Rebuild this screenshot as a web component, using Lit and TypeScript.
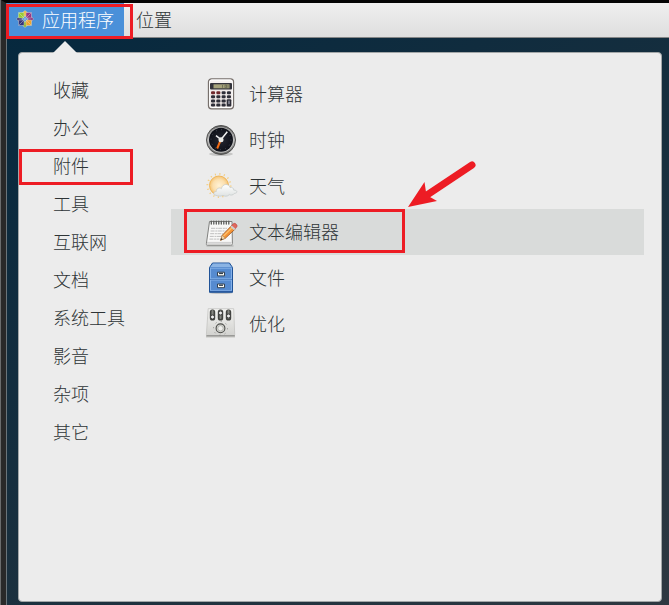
import { LitElement, html, css, svg } from "lit";
import { customElement, state } from "lit/decorators.js";
import { classMap } from "lit/directives/class-map.js";

const calculator = html`<svg class="icon" viewBox="0 0 32 32" aria-hidden="true">
  <defs><linearGradient id="c" x1="0" y1="0" x2="0" y2="1"><stop stop-color="#f8f4f3" /><stop offset="1" stop-color="#e4dddb" /></linearGradient></defs>
  <rect x="3.5" y=".8" width="25" height="30" rx="3" fill="url(#c)" stroke="#77706c" stroke-width="1.3" />
  <rect x="4.7" y="2" width="22.6" height="27.5" rx="2" fill="none" stroke="#fff" />
  <rect x="5" y="5" width="22" height="6.6" rx="1" fill="#34343c" />
  <rect x="8.5" y="6.3" width="16" height="4" fill="#a5a27b" />
  <path d="M17.5 7v2.8M20 7v2.8h1.5V7zM23 7v2.8" fill="none" stroke="#66664f" stroke-width=".8" />
  ${[0, 1, 2, 3].map((r) => [0, 1, 2, 3].map((c) => c === 3 && r > 1 ? null :
    svg`<rect x=${6 + c * 5.3} y=${13.2 + r * 4.1} width="4.1" height="3" rx="1.2" fill=${r === 0 && c < 2 ? "#70282c" : "#2e2e38"} />`))}
  <rect x="21.7" y="21.2" width="4.6" height="7.2" rx="1" fill="#2e2e38" />
  <rect x="23" y="22.6" width="2" height="3.5" fill="#777783" />
</svg>`;

const clock = html`<svg class="icon" viewBox="0 0 32 32" aria-hidden="true">
  <defs><linearGradient id="k" x1="0" y1="0" x2="0" y2="1"><stop stop-color="#666" /><stop offset=".5" stop-color="#b8b8b8" /><stop offset="1" stop-color="#626260" /></linearGradient>
  <radialGradient id="f"><stop stop-color="#252731" /><stop offset="1" stop-color="#0e1018" /></radialGradient></defs>
  <ellipse cx="16" cy="30" rx="12" ry="2" fill="#c6c6c5" />
  <circle cx="16" cy="16" r="14.5" fill="url(#k)" stroke="#50504f" />
  <circle cx="16" cy="16" r="12.8" fill="#c4c4c3" />
  <circle cx="16" cy="15.7" r="12" fill="url(#f)" />
  <circle cx="16" cy="15.7" r="10" fill="none" stroke="#555967" stroke-width="1" stroke-dasharray=".8 4.436" />
  <path d="M15.5 16.5 12.2 24.500" stroke="#f16b16" stroke-width="2" />
  <path d="M16 15.500 22.300 7.800M16 15.500 11 11.600" stroke="#f2f2f2" stroke-width="1.5" />
  <circle cx="16" cy="15.700" r="2.500" fill="#e9e9e5" />
</svg>`;

const weather = html`<svg class="icon" viewBox="0 0 32 32" aria-hidden="true">
  <defs><radialGradient id="s"><stop stop-color="#fff2d6" /><stop offset=".65" stop-color="#fbdfae" /><stop offset="1" stop-color="#f5c373" /></radialGradient>
  <linearGradient id="w" x1="0" y1="0" x2="0" y2="1"><stop stop-color="#fff" /><stop offset="1" stop-color="#dfe3e2" /></linearGradient></defs>
  <circle cx="14" cy="15.5" r="11.6" fill="none" stroke="#f5cd7e" stroke-width="1.8" stroke-dasharray="1.100 3.455" />
  <circle cx="14" cy="15.500" r="9.500" fill="url(#s)" stroke="#efb65a" />
  <path d="M11 25.300C8 25.300 8 21.500 11.300 21.500 11 18.300 14.600 17.200 16.400 18.600 17.300 13.500 24 13.200 25 17.600 27 16.900 29 18.300 28.700 20.100 32.600 20 33.200 23.200 29.300 23.400 28.400 25.400 25.500 25.300 24.200 24.700 22.500 26.800 19.300 26.300 18 25.400 15.500 26.500 13 26.300 11 25.300z" fill="url(#w)" stroke="#c3c9c8" stroke-width=".7" />
</svg>`;

const editor = html`<svg class="icon" viewBox="0 0 32 32" aria-hidden="true">
  <path d="M1.5 29.2h27v1.400h-27z" fill="#b6b7b6" />
  <path d="M4.500 5.500h22.500l.4 22c0 1.200-.6 1.700-1.800 1.700H2.500c-1 0-1.300-.6-1.100-1.600z" fill="#f8f8f7" stroke="#80817f" />
  <path d="M2 26.400h24.500M1.800 27.800h24.400" stroke="#bbb" stroke-width=".7" />
  <path d="M6 12.300h16M5.600 15h15M5.200 17.700h13M4.800 20.400h12M4.400 23.100h10" stroke="#b8b8b8" stroke-width=".9" stroke-dasharray="4 .7 2 .5" />
  <path d="M6.300 8V5.200M8.800 8V5.200M11.300 8V5.200M13.800 8V5.200M16.300 8V5.200M18.800 8V5.200M21.300 8V5.200M23.800 8V5.200" stroke="#5a5c59" stroke-width="1.300" stroke-linecap="round" />
  <path d="M15.500 24.300 17.300 19.200 26.500 9.700 30.200 13 20.300 22.300z" fill="#f59335" stroke="#9b541e" stroke-width=".8" />
  <path d="m18.500 20 9.500-9.200" stroke="#ffc16c" stroke-width="1.200" />
  <path d="m26.300 9.800 2-2c1.500-1.500 4.700 1.300 3.500 3L30 13z" fill="#e0685c" stroke="#b5403a" stroke-width=".6" />
  <path d="m25.300 10.800 1.400-1.400 3.800 3.300-1.500 1.500z" fill="#ced0cf" />
  <path d="m15.500 24.300 1.800-5.100 3 3.100z" fill="#efd4a8" stroke="#a87c48" stroke-width=".5" />
  <path d="m15.500 24.300.8-2.200 1.400 1.300z" fill="#333" />
</svg>`;

const drawer = (y: number) => svg`
  <rect x="5.5" y=${y} width="21" height="10.6" fill="#568bd0" stroke="#84b1e9" />
  <path d="M5 ${y + 11.4}h22" stroke="#24559c" />
  <path d="M12.500 ${y + 4}h7v3.700h-7z" fill="#fafaf5" stroke="#344252" />
  <path d="M14 ${y + 4.6}h4v1.300h-4z" fill="#303e4d" />`;

const files = html`<svg class="icon" viewBox="0 0 32 32" aria-hidden="true">
  <ellipse cx="16" cy="30.8" rx="12" ry="1.2" fill="#c1c3c5" />
  <path d="M4.500 5.500 7.500 1h17l3 4.500v24.800h-23z" fill="#4f84c8" stroke="#205397" />
  <path d="m5.300 5 2.800-3.400h15.800L26.700 5z" fill="#8bb4e4" />
  ${drawer(6.2)}${drawer(18)}
</svg>`;

const tweaks = html`<svg class="icon" viewBox="0 0 32 32" aria-hidden="true">
  <defs><linearGradient id="t" x1="0" y1="0" x2="0" y2="1"><stop stop-color="#f3f3f1" /><stop offset="1" stop-color="#d2d2cf" /></linearGradient></defs>
  <path d="M1 27h29v2.500H1z" fill="#c5c5c1" />
  <path d="M3.200.7h25.500l1 25.500c0 1-.3 1.400-1.300 1.400H2.600c-1 0-1.200-.5-1.200-1.400z" fill="url(#t)" stroke="#c4c4c1" stroke-width=".8" />
  <path d="M1.500 27.800h28.300" stroke="#878785" />
  ${[[7.5, 9], [15.5, 5], [23.5, 8]].map(([x, y]) => svg`
    <rect x=${x - 2.7} y="1.5" width="5.4" height="11" rx="2.600" fill="#41423f" />
    <rect x=${x - 1} y="2" width="2" height="9" rx="1" fill="#858681" />
    <circle cx=${x} cy=${y} r="2" fill="#eee" stroke="#333" stroke-width=".9" />`)}
  <circle cx="15.500" cy="20.300" r="4.400" fill="#d9dad5" stroke="#4b4c49" stroke-width="1.100" />
  <circle cx="15.500" cy="20.300" r="2.700" fill="#efefec" stroke="#92938f" stroke-width=".6" />
  <circle cx="15.500" cy="20.300" r="7" fill="none" stroke="#888986" stroke-width="1" stroke-dasharray="1 4.500" />
</svg>`;

const logo = html`<svg class="logo" viewBox="0 0 18 18" aria-hidden="true">
  <g stroke="#e3e8e0" stroke-width=".4">
    <path d="M9 .5 12 3 9 7 6 3z" fill="#efb73e" />
    <path d="M17.500 9 15 12 11 9l4-3z" fill="#8c357f" />
    <path d="m9 17.500-3-2.500 3-4 3 4z" fill="#8eb42e" />
    <path d="m.5 9 2.500-3 4 3-4 3z" fill="#3c397b" />
    <path d="M2.500 2.500H8V8H2.500z" fill="#9acb35" />
    <path d="M10 2.500h5.500V8H10z" fill="#983584" />
    <path d="M2.500 10H8v5.500H2.500z" fill="#35357b" />
    <path d="M10 10h5.500v5.500H10z" fill="#efa32d" />
    <path d="m3 3 12 12M15 3 3 15" />
  </g>
</svg>`;

const categories = ["收藏", "办公", "附件", "工具", "互联网", "文档", "系统工具", "影音", "杂项", "其它"];
const apps = [
  { name: "计算器", icon: calculator },
  { name: "时钟", icon: clock },
  { name: "天气", icon: weather },
  { name: "文本编辑器", icon: editor },
  { name: "文件", icon: files },
  { name: "优化", icon: tweaks },
];

@customElement("app-root")
export class AppRoot extends LitElement {
  @state() private category = 2;
  @state() private app = 3;

  static styles = css`
    :host {
      display: block;
      min-height: 100vh;
      border-left: 1px solid #6a6c6d;
      font: 300 18px/24px "Noto Sans CJK SC", sans-serif;
      color: #2e3436;
    }
    *, *::before, *::after { box-sizing: border-box; }
    .frame {
      display: flex;
      flex-direction: column;
      min-height: 100vh;
      border-left: 5px solid #292929;
      border-top: 3px solid #050505;
      background: linear-gradient(150deg, #05283e, #182f3e 55%, #2e3841);
    }
    button {
      border: 0;
      padding: 0 0 2px;
      background: none;
      color: inherit;
      font: inherit;
      text-align: left;
      white-space: nowrap;
    }
    .bar {
      display: flex;
      height: 35px;
      border-left: 1px solid #77797a;
      border-bottom: 1px solid #858686;
      background: linear-gradient(#efefef, #dedede);
    }
    .top { position: relative; padding: 0 12px 3px; }
    .top.open {
      display: flex;
      align-items: center;
      gap: 8px;
      padding: 0 10px 3px 9px;
      background: #4a90d9;
      color: #fff;
    }
    .logo { width: 18px; height: 18px; }
    .desktop {
      flex: 1;
      display: flex;
      padding: 14px 7px 3px 11px;
      border-left: 1px solid #6a747a;
    }
    .menu {
      position: relative;
      flex: 1;
      display: flex;
      padding: 18px 17px 18px 0;
      border: 1px solid #a3a7a8;
      border-radius: 4px;
      background: #ececec;
    }
    .menu::before {
      content: "";
      position: absolute;
      left: 34px;
      top: -12px;
      width: 24px;
      height: 12px;
      background: #ececec;
      clip-path: polygon(50% 0, 100% 100%, 0 100%);
    }
    .categories { width: 152px; display: flex; flex-direction: column; }
    .category { position: relative; height: 38px; padding-left: 34px; }
    .apps { flex: 1; display: flex; flex-direction: column; }
    .app {
      position: relative;
      display: flex;
      align-items: center;
      gap: 12px;
      height: 46px;
      padding: 0 0 0 34px;
    }
    .app span { padding-bottom: 2px; }
    .app.selected { background: #d9dbda; }
    .icon { width: 32px; height: 32px; overflow: visible; }
    .marked::after {
      content: "";
      position: absolute;
      border: 3px solid #ed1c24;
      pointer-events: none;
    }
    .top.marked::after { inset: 1px -9px -2px -1px; }
    .category.marked::after { inset: 2px 38px 0 0; }
    .app.marked::after { left: 13px; top: 0; width: 221px; height: 44px; }
    .arrow {
      position: absolute;
      left: 236px;
      top: -50px;
      width: 70px;
      height: 50px;
      pointer-events: none;
    }
  `;

  render() {
    return html`
      <div class="frame">
        <nav class="bar">
          <button class="top open marked" aria-expanded="true">${logo}<span>应用程序</span></button>
          <button class="top">位置</button>
        </nav>
        <main class="desktop">
          <section class="menu">
            <nav class="categories">
              ${categories.map((name, i) => html`
                <button class=${classMap({ category: true, marked: i === this.category })}
                  @click=${() => (this.category = i)}>${name}</button>`)}
            </nav>
            <div class="apps">
              ${apps.map((a, i) => html`
                <button class=${classMap({ app: true, selected: i === this.app, marked: i === this.app })}
                  @click=${() => (this.app = i)}>
                  ${a.icon}<span>${a.name}</span>
                  ${i === this.app ? html`<svg class="arrow" viewBox="0 0 70 50" aria-hidden="true">
                    <path d="M65 6 20 36" stroke="#ed1c24" stroke-width="7" stroke-linecap="round" />
                    <path d="M1 48 17.500 23 19 33 23 38 30 42z" fill="#ed1c24" />
                  </svg>` : null}
                </button>`)}
            </div>
          </section>
        </main>
      </div>`;
  }
}
